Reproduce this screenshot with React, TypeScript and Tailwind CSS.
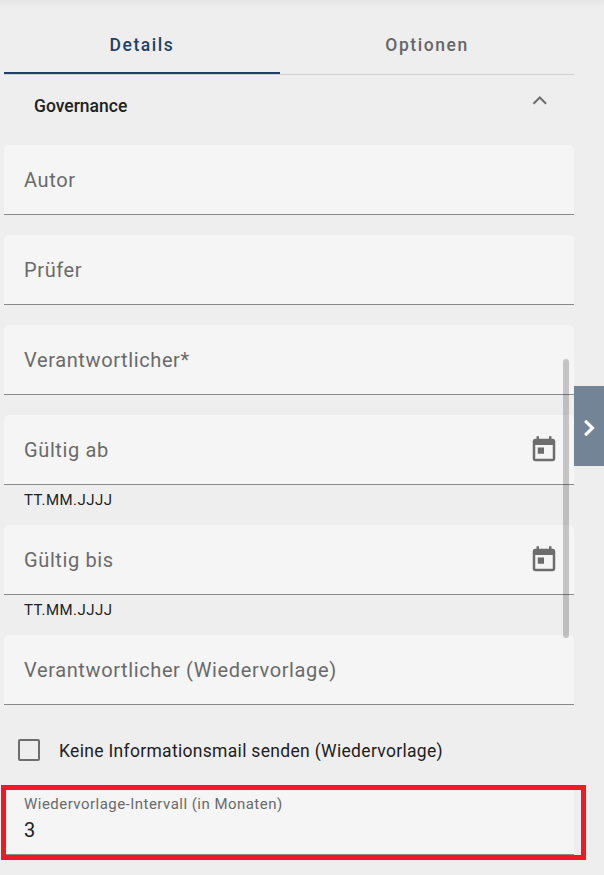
interface FieldProps {
  label: string;
  date?: boolean;
}

function CalendarIcon() {
  return (
    <svg viewBox="0 0 24 24" className="h-[30px] w-[30px] fill-[#6d6d6d]">
      <path d="M19 3h-1V1h-2v2H8V1H6v2H5c-1.110 0-1.990.9-1.990 2L3 19c0 1.100.890 2 2 2h14c1.100 0 2-.9 2-2V5c0-1.100-.9-2-2-2zm0 16H5V8h14v11zM7 10h5v5H7z" />
    </svg>
  );
}

function Field({ label, date }: FieldProps) {
  return (
    <div className={date ? 'h-[110px]' : 'h-[90px]'}>
      <div className="flex h-[70px] items-center justify-between rounded-t-[5px] border-b border-[#8a8a8a] bg-[#f5f5f5] pr-[15px] pl-5">
        <span className="text-[20px] tracking-[0.62px] text-[#6a6a6a]">{label}</span>
        {date && <CalendarIcon />}
      </div>
      {date && <p className="pt-[5px] pl-5 text-[15px] leading-[20px] tracking-[0.5px] text-[#222222]">TT.MM.JJJJ</p>}
    </div>
  );
}

export default function App() {
  return (
    <div className="relative h-[875px] w-[604px] overflow-hidden bg-[#eeeeee] pl-1 font-['Roboto',sans-serif] text-[#212121]">
      <div className="absolute top-0 left-0 h-[8px] w-full bg-linear-to-b from-[#e6e6e6] to-[#eeeeee]" />
      <div className="w-[570px]">
        <div className="grid h-[75px] grid-cols-[276px_294px] border-b border-[#d0d0d0] pt-[14px] text-center text-[17.5px] font-medium tracking-[1.56px]">
          <div className="h-[60px] border-b-2 border-[#1f4068] leading-[62px] text-[#1f4068]">Details</div>
          <div className="leading-[62px] text-[#666666]">Optionen</div>
        </div>
        <div className="flex h-[70px] justify-between pt-[16px] pr-[20px] pl-[30px]">
          <h2 className="text-[17.5px] leading-[30px] font-medium">Governance</h2>
          <svg viewBox="0 0 28 28" className="-mt-[5px] h-[28px] w-[28px] fill-none stroke-[#6d6d6d] stroke-2">
            <path d="M7.500 17.800l6.300-6.300 6.300 6.300" />
          </svg>
        </div>
        <Field label="Autor" />
        <Field label="Prüfer" />
        <Field label="Verantwortlicher*" />
        <Field label="Gültig ab" date />
        <Field label="Gültig bis" date />
        <Field label="Verantwortlicher (Wiedervorlage)" />
        <label className="flex h-[60px] items-center gap-[19px] pb-[10px] pl-[14px]">
          <span className="h-[22px] w-[22px] rounded-[2px] border-2 border-[#6d6d6d]" />
          <span className="pt-[2px] text-[17.5px] tracking-[0.31px]">Keine Informationsmail senden (Wiedervorlage)</span>
        </label>
        <div className="h-[70px] border-b border-[#8a8a8a] bg-[#f5f5f5] pl-5">
          <p className="pt-[9px] text-[15px] leading-[20px] tracking-[0.47px] text-[#6a6a6a]">Wiedervorlage-Intervall (in Monaten)</p>
          <p className="pt-[3px] text-[20px] leading-[26px]">3</p>
        </div>
      </div>
      <div className="absolute top-[359px] left-[563px] h-[279px] w-[6px] rounded-full bg-black/20" />
      <div className="absolute top-[386px] left-[574px] flex h-[80px] w-[30px] items-center justify-center bg-[#728496] pt-1">
        <svg viewBox="0 0 24 24" className="h-[32px] w-[32px] shrink-0 fill-white stroke-white stroke-[0.5]">
          <path d="M10 6L8.590 7.410 13.170 12l-4.580 4.590L10 18l6-6z" />
        </svg>
      </div>
      <div className="absolute top-[785px] left-px h-[75px] w-[585px] border-[5px] border-[#ed1c24]" />
    </div>
  );
}
